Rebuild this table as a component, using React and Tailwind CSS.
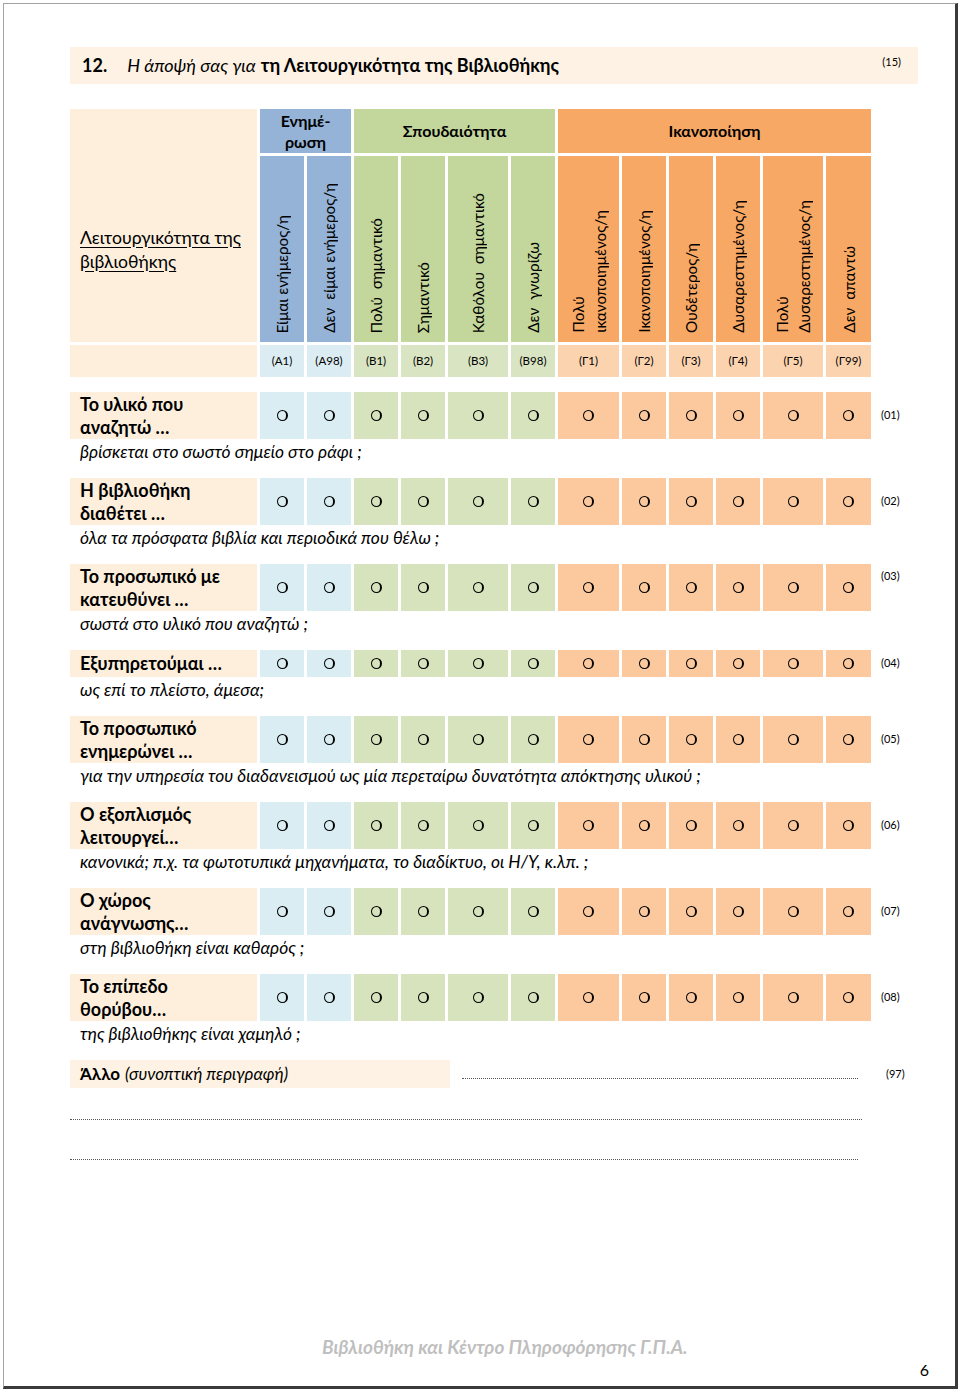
import React from "react";

const COLS =
  "grid grid-cols-[187px_44px_44px_44px_44px_60px_44px_61px_44px_44px_44px_60px_45px_1fr] gap-x-[3px]";

const groups = ["a", "a", "b", "b", "b", "b", "c", "c", "c", "c", "c", "c"];

const headBg = { a: "bg-[#95B3D7]", b: "bg-[#C3D69B]", c: "bg-[#F8A865]" };
const codeBg = { a: "bg-[#DBEDF3]", b: "bg-[#D9E5C2]", c: "bg-[#FCD3AF]" };
const cellBg = { a: "bg-[#DAEDF3]", b: "bg-[#D6E3BD]", c: "bg-[#FBC99D]" };

const vlabels = [
  ["Είμαι ενήμερος/η"],
  ["Δεν  είμαι ενήμερος/η"],
  ["Πολύ  σημαντικό"],
  ["Σημαντικό"],
  ["Καθόλου  σημαντικό"],
  ["Δεν  γνωρίζω"],
  ["Πολύ", "ικανοποιημένος/η"],
  ["Ικανοποιημένος/η"],
  ["Ουδέτερος/η"],
  ["Δυσαρεστημένος/η"],
  ["Πολύ", "Δυσαρεστημένος/η"],
  ["Δεν  απαντώ"],
];

const codes = ["(Α1)", "(Α98)", "(Β1)", "(Β2)", "(Β3)", "(Β98)", "(Γ1)", "(Γ2)", "(Γ3)", "(Γ4)", "(Γ5)", "(Γ99)"];

const rows = [
  { l: ["Το υλικό που", "αναζητώ …"], s: "βρίσκεται στο σωστό σημείο στο ράφι ;", c: "(01)" },
  { l: ["Η βιβλιοθήκη", "διαθέτει …"], s: "όλα τα πρόσφατα βιβλία και περιοδικά που θέλω ;", c: "(02)" },
  { l: ["Το προσωπικό με", "κατευθύνει …"], s: "σωστά στο υλικό που αναζητώ ;", c: "(03)", top: true },
  { l: ["Εξυπηρετούμαι …"], s: "ως επί το πλείστο, άμεσα;", c: "(04)" },
  { l: ["Το προσωπικό", "ενημερώνει …"], s: "για την υπηρεσία του διαδανεισμού ως μία περεταίρω δυνατότητα απόκτησης υλικού ;", c: "(05)" },
  { l: ["Ο εξοπλισμός", "λειτουργεί…"], s: "κανονικά; π.χ. τα φωτοτυπικά μηχανήματα, το διαδίκτυο, οι Η/Υ, κ.λπ. ;", c: "(06)" },
  { l: ["Ο χώρος", "ανάγνωσης…"], s: "στη βιβλιοθήκη είναι καθαρός ;", c: "(07)" },
  { l: ["Το επίπεδο", "θορύβου…"], s: "της βιβλιοθήκης είναι χαμηλό ;", c: "(08)" },
];

function Radio() {
  return (
    <span className="block w-[11px] h-[11px] rounded-full border border-black border-r-[2px]" />
  );
}

function QRow({ r }) {
  const two = r.l.length > 1;
  return (
    <div className="flex flex-col mb-[12px]">
      <div className={COLS}>
        <div
          className={`bg-[#FDEFDC] pl-[10px] flex flex-col justify-center font-bold text-[18px] leading-[23px] ${
            two ? "h-[47px]" : "h-[27px]"
          }`}
        >
          {r.l.map((t, i) => (
            <span key={i}>{t}</span>
          ))}
        </div>
        {groups.map((g, i) => (
          <div key={i} className={`${cellBg[g]} flex items-center justify-center`}>
            <Radio />
          </div>
        ))}
        <div className={`pl-[7px] text-[11px] flex ${r.top ? "items-start pt-[4px]" : "items-center"}`}>{r.c}</div>
      </div>
      <div className="pl-[10px] h-[27px] flex items-center italic text-[17.4px]">{r.s}</div>
    </div>
  );
}

export default function App() {
  return (
    <div className="w-[960px] h-[1390px] bg-white pt-[3px] pl-[3px] font-[Lato,'Open_Sans',sans-serif] text-black">
      <div className="w-[955px] h-[1386px] border-l border-t border-[#a3a3a3] border-r-[3px] border-b-[3px] border-r-[#3a3a3a] border-b-[#3a3a3a] pl-[66px] pt-[43px] flex flex-col">
        {/* Title */}
        <div className="w-[848px] h-[37px] bg-[#FDF2E3] flex items-center pl-[12px] pr-[17px] text-[18px]">
          <span className="font-bold">12.</span>
          <span className="ml-[20px] italic">Η άποψή σας για</span>
          <span className="ml-[5px] font-bold">τη Λειτουργικότητα της Βιβλιοθήκης</span>
          <span className="ml-auto text-[11px] self-start mt-[7px]">(15)</span>
        </div>

        {/* Header */}
        <div className={`${COLS} gap-y-[3px] mt-[25px] grid-rows-[44px_186px_32px]`}>
          <div className="row-span-2 bg-[#FDEFDC] flex items-center pl-[10px] pt-[48px]">
            <span className="underline text-[17.6px] leading-[24px] underline-offset-[3px]">
              Λειτουργικότητα της
              <br />
              βιβλιοθήκης
            </span>
          </div>
          <div className="col-span-2 bg-[#95B3D7] flex items-center justify-center text-center font-bold text-[16px] leading-[21px]">
            Ενημέ-
            <br />
            ρωση
          </div>
          <div className="col-span-4 bg-[#C3D69B] flex items-center justify-center font-bold text-[16px]">
            Σπουδαιότητα
          </div>
          <div className="col-span-6 bg-[#F8A865] flex items-center justify-center font-bold text-[16px]">
            Ικανοποίηση
          </div>
          <div className="row-span-2" />
          {vlabels.map((v, i) => (
            <div key={i} className={`${headBg[groups[i]]} flex justify-center items-end pb-[9px]`}>
              <div className="[writing-mode:vertical-rl] rotate-180 text-[15.3px] leading-[22px] whitespace-pre flex flex-col">
                {v.map((t, j) => (
                  <span key={j}>{t}</span>
                ))}
              </div>
            </div>
          ))}
          <div className="bg-[#FDEFDC]" />
          {codes.map((c, i) => (
            <div key={i} className={`${codeBg[groups[i]]} flex items-center justify-center text-[11.5px]`}>
              {c}
            </div>
          ))}
        </div>

        {/* Questions */}
        <div className="mt-[15px] flex flex-col">
          {rows.map((r, i) => (
            <QRow key={i} r={r} />
          ))}
        </div>

        {/* Other */}
        <div className="flex items-center">
          <div className="w-[380px] h-[28px] bg-[#FDF2E3] pl-[10px] flex items-center text-[17px]">
            <span className="font-bold">Άλλο</span>
            <span className="ml-[5px] italic">(συνοπτική περιγραφή)</span>
          </div>
          <div className="ml-[12px] w-[396px] mt-[8px] border-b-[1.5px] border-dotted border-[#555]" />
          <span className="ml-[28px] text-[11px]">(97)</span>
        </div>
        <div className="mt-[31px] w-[792px] border-b-[1.5px] border-dotted border-[#555]" />
        <div className="mt-[39px] w-[788px] border-b-[1.5px] border-dotted border-[#555]" />

        {/* Footer */}
        <div className="mt-auto flex flex-col pr-[26px] pb-[4px]">
          <div className="pl-[252px] text-[19px] font-bold italic text-[#bfbfbf]">
            Βιβλιοθήκη και Κέντρο Πληροφόρησης Γ.Π.Α.
          </div>
          <div className="self-end text-[16px] mt-[-3px]">6</div>
        </div>
      </div>
    </div>
  );
}
